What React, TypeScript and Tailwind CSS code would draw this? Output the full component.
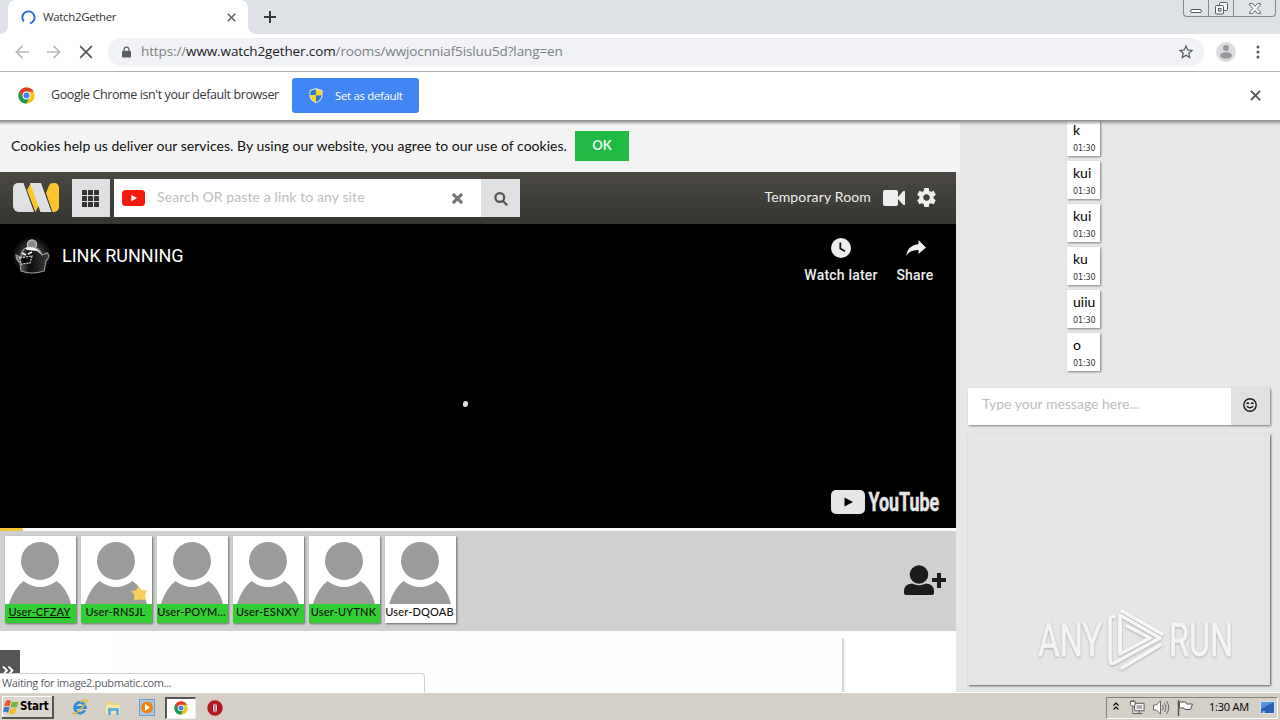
import React from 'react';

const ui = "font-['Open_Sans','Noto_Sans',sans-serif]";

function ChromeLogo({ className }: { className: string }) {
  return (
    <svg viewBox="0 0 24 24" className={className}>
      <circle cx="12" cy="12" r="11.5" fill="#fbc116" />
      <path d="M12 12 L7 14.8 L2.1 6.2 A11.5 11.5 0 0 1 22 6.5 H12 Z" fill="#dd3d2e" />
      <path d="M2.1 6.2 A11.5 11.5 0 0 0 11.6 23.5 L16.6 14.8 L12 17 L7 14.8 Z" fill="#149b56" />
      <circle cx="12" cy="12" r="5.6" fill="#fff" />
      <circle cx="12" cy="12" r="4.3" fill="#4584ed" />
    </svg>
  );
}

function Cross({ className, w = 2 }: { className: string; w?: number }) {
  return (
    <svg viewBox="0 0 12 12" className={className} stroke="currentColor" strokeWidth={w} fill="none">
      <path d="M1 1 11 11 M11 1 1 11" />
    </svg>
  );
}

function TabStrip() {
  return (
    <div className="flex h-[34px] shrink-0 items-end bg-[#dee1e6]">
      <div className="h-full w-2 bg-white">
        <div className="h-full rounded-br-lg bg-[#dee1e6]" />
      </div>
      <div className="flex h-full w-60 items-center rounded-t-lg bg-white pl-[13px]">
        <svg viewBox="0 0 16 16" className="h-[15px] w-[15px]" fill="none" stroke="#2a68d8" strokeWidth="2">
          <path d="M3 12.200A6.500 6.500 0 1 1 9.500 14.300" />
        </svg>
        <span className="ml-[7px] w-[150px] text-[11.5px] tracking-[-0.35px] text-[#333]">Watch2Gether</span>
        <Cross className="ml-[34px] h-[9px] w-[9px] text-[#5f6368]" />
      </div>
      <div className="flex h-full w-11 bg-white">
        <div className="flex h-full w-full items-center rounded-bl-lg bg-[#dee1e6] pl-4">
          <svg viewBox="0 0 12 12" className="h-3 w-3" stroke="#36393d" strokeWidth="2">
            <path d="M6 0V12M0 6H12" />
          </svg>
        </div>
      </div>
      <div className="ml-auto mr-1 flex h-[17px] w-[93px] self-start rounded-b border border-t-0 border-[#85888f] bg-[#dfe2e7]">
        <div className="flex w-[25px] items-end justify-center border-r border-[#85888f] pb-[3px]">
          <div className="h-1 w-3 rounded-sm border border-[#555960] bg-white" />
        </div>
        <div className="flex w-[25px] items-center justify-center border-r border-[#85888f]">
          <svg viewBox="0 0 13 13" className="h-[13px] w-[13px]" fill="#f5f6f8" stroke="#555960">
            <rect x="4.5" y=".5" width="8" height="8" rx="1" />
            <rect x=".5" y="3.500" width="8" height="8.500" rx="1" />
            <rect x="3.500" y="6.500" width="2.500" height="2.500" />
          </svg>
        </div>
        <div className="flex flex-1 items-center justify-center">
          <svg viewBox="0 0 12 11" className="h-[11px] w-3" fill="#f5f6f8" stroke="#555960" strokeWidth=".9">
            <path d="M.6.6H3.700L6 3.400 8.300.6H11.400V2L8.200 5.500 11.400 9V10.400H8.300L6 7.600 3.700 10.400H.6V9L3.800 5.500.6 2Z" />
          </svg>
        </div>
      </div>
    </div>
  );
}

function Toolbar() {
  return (
    <div className="flex h-[38px] shrink-0 items-center border-b border-[#b1b3b5] bg-white pb-px pl-[15px] pr-[14px]">
      <svg viewBox="0 0 14 14" className="h-[14px] w-[14px]" fill="none" stroke="#b5b7ba" strokeWidth="1.700">
        <path d="M14 7H1.500M7.500 .8 1.300 7 7.500 13.200" />
      </svg>
      <svg viewBox="0 0 14 14" className="ml-[18px] h-[14px] w-[14px]" fill="none" stroke="#b5b7ba" strokeWidth="1.700">
        <path d="M0 7H12.500M6.500 .8 12.700 7 6.500 13.200" />
      </svg>
      <Cross className="ml-[18px] h-[14px] w-[14px] text-[#55585c]" w={1.5} />
      <div className="ml-[15px] flex h-7 w-[1096px] items-center rounded-full bg-[#f0f2f5] pl-[14px] pr-[9px]">
        <svg viewBox="0 0 10 12" className="h-3 w-[9px]" fill="#5a5d61">
          <rect x="0" y="4.500" width="10" height="7.500" rx="1" />
          <path d="M2.300 5V3.200a2.700 2.700 0 0 1 5.400 0V5" fill="none" stroke="#5a5d61" strokeWidth="1.300" />
        </svg>
        <span className="mb-px ml-[10px] whitespace-pre text-[13.5px] tracking-[-0.12px] text-[#7c7f84]">
          https://<span className="text-[#202124]">www.watch2gether.com</span>/rooms/wwjocnniaf5isluu5d?lang=en
        </span>
        <svg viewBox="0 0 24 24" className="ml-auto h-[18px] w-[18px]" fill="#55585c">
          <path d="M22 9.240l-7.190-.62L12 2 9.190 8.630 2 9.240l5.460 4.730L5.820 21 12 17.270 18.180 21l-1.630-7.030L22 9.240zM12 15.400l-3.760 2.270 1-4.280-3.320-2.880 4.380-.38L12 6.100l1.710 4.040 4.380.38-3.320 2.880 1 4.280L12 15.400z" />
        </svg>
      </div>
      <svg viewBox="0 0 20 20" className="ml-3 h-5 w-5">
        <circle cx="10" cy="10" r="10" fill="#dcdddf" />
        <circle cx="10" cy="6" r="3" fill="#97999c" />
        <ellipse cx="10" cy="13.500" rx="6" ry="3.200" fill="#97999c" />
      </svg>
      <svg viewBox="0 0 4 14" className="ml-auto mr-[6px] h-[14px] w-1" fill="#55585c">
        <circle cx="2" cy="2" r="1.500" /><circle cx="2" cy="7" r="1.500" /><circle cx="2" cy="12" r="1.500" />
      </svg>
    </div>
  );
}

function InfoBar() {
  return (
    <div className="flex h-[49px] shrink-0 items-center bg-white pb-[2px] pl-[18px] pr-[19px]">
      <ChromeLogo className="h-[17px] w-[17px]" />
      <span className="ml-4 w-[229px] whitespace-nowrap text-[12.5px] tracking-[-0.4px] text-[#35383c]">Google Chrome isn't your default browser</span>
      <div className="ml-3 flex h-[35px] w-[127px] items-center rounded-[3px] bg-[#4285f4] pl-[17px] text-[11.5px] tracking-[-0.35px] text-white">
        <svg viewBox="0 0 14 15" className="mr-3 h-[15px] w-[14px]">
          <path d="M7 0 13.500 2.200V7C13.500 11 10.500 13.800 7 15 3.500 13.800.5 11 .5 7V2.200Z" fill="#e6e9da" />
          <path d="M6.900 1.200V7.300H1.400V2.900Z M12.600 7.300C12.400 10.600 10 12.900 7 14V7.300Z" fill="#2f76c4" />
          <path d="M7 1.200V7.300H12.600V2.900Z M1.400 7.300C1.600 10.600 4 12.900 7 14V7.300Z" fill="#f8d327" />
        </svg>
        Set as default
      </div>
      <Cross className="ml-auto h-[11px] w-[11px] text-[#55585c]" w={2.1} />
    </div>
  );
}

function CookieBar() {
  return (
    <div className="flex h-[51px] w-[960px] shrink-0 items-center bg-[#f3f3f3] pb-px pl-[11px] text-[14px] text-[#111]">
      <span className="mb-[2px] w-[564px] whitespace-nowrap tracking-[0.03px]">Cookies help us deliver our services. By using our website, you agree to our use of cookies.</span>
      <div className="flex h-[30px] w-[54px] items-center justify-center bg-[#21ba45] text-[13px] font-bold text-[#e9f8ed]">OK</div>
    </div>
  );
}

function RoomHeader() {
  return (
    <div className="flex h-[52px] shrink-0 items-center bg-linear-to-b from-[#4b4844] to-[#353630] pl-[13px] pr-5">
      <svg viewBox="0 0 46 30" className="h-[30px] w-[46px]">
        <path d="M18 0 14 7 22.500 29 27 20Z" fill="#fbc52e" />
        <path d="M41 0A4.500 4.500 0 0 1 46 4.500V24A5 5 0 0 1 41 29H39.500L33 10 36 2.500Q37 0 39.500 0Z" fill="#fbc52e" />
        <path d="M5 0H10.500L21 29H6A6 6 0 0 1 0 23V5A5 5 0 0 1 5 0Z" fill="#dfe0e2" />
        <path d="M17 0H28L38.500 29H27.500Z" fill="#dfe0e2" />
      </svg>
      <div className="ml-[13px] flex h-[38px] w-[38px] items-center justify-center bg-[#dfe0e2] pr-px">
        <svg viewBox="0 0 17 17" className="h-[17px] w-[17px]" fill="#333">
          {[0, 6, 12].map((x) => [0, 6, 12].map((y) => <rect key={`${x}-${y}`} x={x} y={y} width="5" height="5" rx=".5" />))}
        </svg>
      </div>
      <div className="ml-1 flex h-[38px] w-[367px] items-center bg-white pl-2 pr-[18px]">
        <svg viewBox="0 0 23 16" className="h-4 w-[23px]">
          <rect width="23" height="16" rx="3.500" fill="#f61c0d" /><path d="M9.300 4.700 15 8 9.300 11.300Z" fill="#fff" />
        </svg>
        <span className="mb-1 ml-3 text-[14px] tracking-[0.1px] text-[#bdbdbd]">Search OR paste a link to any site</span>
        <Cross className="ml-auto h-[11px] w-[11px] text-[#777]" w={3.4} />
      </div>
      <div className="flex h-[38px] w-[39px] items-center justify-center bg-[#dfe0e2] pt-[2px]">
        <svg viewBox="0 0 14 14" className="h-[14px] w-[14px]" fill="none" stroke="#555" strokeWidth="2.200">
          <circle cx="5.800" cy="5.500" r="4.400" /><path d="M9 9 13.200 13.200" />
        </svg>
      </div>
      <span className="ml-auto mb-1 text-[14px] tracking-[0.15px] text-[#eee]">Temporary Room</span>
      <svg viewBox="0 0 22 16" className="mb-px ml-3 h-4 w-[22px]" fill="#eee">
        <rect y="0" width="15" height="16" rx="2" /><path d="M15 7 20 1.200Q22 0 22 2V14Q22 16 20 14.800L15 9Z" />
      </svg>
      <svg viewBox="2 2 20 20" className="mb-px ml-3 h-[19px] w-[19px]" fill="#eee">
        <path d="M19.430 12.980c.04-.32.070-.64.070-.98s-.03-.66-.07-.98l2.110-1.650c.19-.15.240-.42.120-.64l-2-3.460c-.12-.22-.39-.3-.61-.22l-2.490 1c-.52-.4-1.080-.73-1.690-.98l-.38-2.650A.488.488 0 0 0 14 2h-4c-.25 0-.46.180-.49.420l-.38 2.650c-.61.250-1.170.590-1.690.980l-2.490-1c-.23-.09-.49 0-.61.220l-2 3.460c-.13.220-.07.490.120.640l2.110 1.650c-.04.320-.07.650-.07.980s.03.660.070.980l-2.110 1.650c-.19.150-.24.420-.12.640l2 3.460c.12.220.390.300.610.220l2.490-1c.52.400 1.080.730 1.690.980l.38 2.650c.03.240.240.420.490.420h4c.25 0 .46-.18.490-.42l.38-2.650c.61-.25 1.170-.59 1.690-.98l2.490 1c.23.090.490 0 .61-.22l2-3.460c.12-.22.070-.49-.12-.64l-2.110-1.650zM12 15.500c-1.930 0-3.500-1.570-3.500-3.500s1.570-3.500 3.500-3.500 3.500 1.570 3.500 3.500-1.570 3.500-3.500 3.500z" />
      </svg>
    </div>
  );
}

function Video() {
  return (
    <div className="flex h-[304px] shrink-0 flex-col bg-black pl-3 pr-[21px] font-[Roboto,sans-serif] text-[#eee]">
      <div className="flex h-20 items-start pt-3">
        <svg viewBox="0 0 40 40" className="h-10 w-10">
          <defs>
            <radialGradient id="aura"><stop offset=".6" stopColor="#2c2c2c" /><stop offset="1" stopColor="#000" /></radialGradient>
            <linearGradient id="ghost"><stop offset=".05" stopColor="#777" /><stop offset=".4" stopColor="#0c0c0c" /><stop offset="1" stopColor="#3c3c3c" /></linearGradient>
          </defs>
          <circle cx="20" cy="20" r="20" fill="url(#aura)" />
          <circle cx="20" cy="8.500" r="4.500" fill="#888" stroke="#bbb" strokeWidth="1.500" />
          <path d="M9 20C9 8 28 8 30 19L35 17Q39 20 34 25L32 35Q20 39 9 35L8 27Q4 24 4 19L8 21Z" fill="url(#ghost)" stroke="#999" strokeWidth="1.100" />
          <path d="M13 12Q24 8 30 19L25 15 15 14Z" fill="#f4f4f4" />
          <path d="M10 17 14 19M16 18 20 16" stroke="#fff" strokeWidth="1.500" />
          <path d="M8 22 20 20 18 27 9 28Z" fill="#080808" stroke="#ddd" strokeWidth="1.200" strokeDasharray="2 1" />
        </svg>
        <span className="ml-[10px] mt-[6px] text-[18px] leading-7 text-white">LINK RUNNING</span>
        <div className="ml-auto mt-[2px] flex w-[76px] flex-col items-center text-[14px] font-medium">
          <svg viewBox="0 0 20 20" className="h-5 w-5"><circle cx="10" cy="10" r="10" fill="#eee" /><path d="M9.300 4.500V10.500L14 13.300" fill="none" stroke="#111" strokeWidth="1.800" /></svg>
          <span className="mt-[7px] whitespace-nowrap leading-5 tracking-[0.2px]">Watch later</span>
        </div>
        <div className="ml-4 mt-[2px] flex w-10 flex-col items-center text-[14px] font-medium">
          <svg viewBox="0 0 20 20" className="ml-px h-5 w-5"><path d="M12.500 2 20 9.500 12.500 16V12Q4 11.500 0 18 1.500 7.500 12.500 6Z" fill="#eee" /></svg>
          <span className="mt-[7px] leading-5 tracking-[0.2px]">Share</span>
        </div>
      </div>
      <div className="flex flex-1 items-center justify-center pt-[14px]">
        <div className="mr-[17px] h-[6px] w-[5px] rotate-12 rounded-sm bg-[#ddd]" />
      </div>
      <svg viewBox="0 0 110 26" className="-mr-[5px] mb-[13px] h-[26px] w-[110px] shrink-0 self-end overflow-visible">
        <rect x="1" y="1" width="34" height="24" rx="5" fill="#e6e6e6" />
        <path d="M14.500 8.500 23 13 14.500 17.500Z" fill="#000" />
        <text x="0" y="0" transform="translate(38.500 22) scale(.72 1)" fontFamily="Roboto, sans-serif" fontWeight="700" fontSize="25" textLength="98" lengthAdjust="spacingAndGlyphs" fill="#e6e6e6" stroke="#e6e6e6" strokeWidth=".5">YouTube</text>
      </svg>
    </div>
  );
}

const users = [
  { name: 'User-CFZAY', on: true, self: true, star: false },
  { name: 'User-RNSJL', on: true, self: false, star: true },
  { name: 'User-POYM...', on: true, self: false, star: false },
  { name: 'User-ESNXY', on: true, self: false, star: false },
  { name: 'User-UYTNK', on: true, self: false, star: false },
  { name: 'User-DQOAB', on: false, self: false, star: false },
];

function Users() {
  return (
    <div className="flex h-[100px] shrink-0 items-start bg-[#d0d0d0] pl-[5px] pt-[5px]">
      <div className="flex gap-[5px]">
        {users.map((u) => (
          <div key={u.name} className="relative h-[87px] w-[71px] bg-white shadow-[1px_1px_2px_rgba(0,0,0,0.5)]">
            <svg viewBox="0 0 71 68" className="h-[68px] w-[71px]" fill="#9b9b9b">
              <circle cx="35" cy="25" r="19" />
              <path d="M4 68Q9 52 18.500 45Q35 57 51.500 45Q62 52 66 68Z" />
            </svg>
            {u.star && (
              <svg viewBox="0 0 16 15" className="absolute bottom-[22px] right-[5px] h-[15px] w-4">
                <path d="M7.500 0 10.500 4 16 4.500 14 9 15 14 9 13.500 3 14.500 3.500 9 0 5 5 4.500Z" fill="#f8cf58" />
              </svg>
            )}
            <div className={`flex h-[19px] items-center justify-center whitespace-nowrap pb-[3px] pr-[2px] text-[11px] font-medium tracking-[0.18px] text-[#111] ${u.on ? 'bg-[#32cd32]' : 'bg-white'} ${u.self ? 'underline' : ''}`}>
              {u.name}
            </div>
          </div>
        ))}
      </div>
      <svg viewBox="0 0 42 30" className="ml-auto mr-[10px] mt-[29px] h-[30px] w-[42px]" fill="#1b1b1b">
        <circle cx="15" cy="9.500" r="9.300" />
        <path d="M0 26Q0 19 8 18.500Q15 22 22 18.500Q30 19 30 26V28Q30 30 28 30H2Q0 30 0 28Z" />
        <path d="M33 8H37V13H42V17H37V23H33V17H28V13H33Z" />
      </svg>
    </div>
  );
}

const messages = ['k', 'kui', 'kui', 'ku', 'uiiu', 'o'];

function Sidebar() {
  return (
    <div className="flex flex-1 flex-col bg-[#e7e7e7] pl-2 pr-[10px]">
      <div className="flex h-[267px] flex-col items-center gap-[5px] overflow-hidden pr-[71px]">
        {messages.map((m, i) => (
          <div key={i} className={`h-[38px] w-[33px] shrink-0 bg-white pl-[6px] text-[14px] leading-5 text-black shadow-[1px_1px_2px_rgba(0,0,0,0.45)] ${i === 0 ? '-mt-[3px]' : ''}`}>
            <div className="h-6 pt-[2px]">{m}</div>
            <div className="text-[8px] leading-[13px] tracking-[-0.1px] text-[#333] font-['DejaVu_Sans',sans-serif]">01:30</div>
          </div>
        ))}
      </div>
      <div className="flex h-[37px] shrink-0 bg-white shadow-[1px_1px_2px_rgba(0,0,0,0.45)]">
        <div className="flex-1 pl-[14px] pt-[5px] text-[14px] leading-[21px] text-[#bdbdbd]">Type your message here...</div>
        <div className="flex w-[39px] items-center justify-center bg-[#e0e1e2] pr-px pb-[3px]">
          <svg viewBox="0 0 14 14" className="h-[14px] w-[14px]" fill="none" stroke="#1b1b1b" strokeWidth="1.400">
            <circle cx="7" cy="7" r="6.200" /><path d="M3.500 5.700Q4.800 4.300 6 5.700M8 5.700Q9.200 4.300 10.500 5.700M3.800 8.200Q7 11.300 10.200 8.200" />
          </svg>
        </div>
      </div>
      <div className="mt-[9px] flex h-[251px] shrink-0 items-end justify-end bg-[#e5e5e5] pb-[13px] pr-[34px] shadow-[1px_1px_2px_rgba(0,0,0,0.6)]">
        <svg viewBox="0 0 202 66" className="h-[66px] w-[202px] overflow-visible drop-shadow-[0_1px_1px_rgba(0,0,0,0.25)]" fill="none" stroke="#f6f6f6" strokeWidth="3.500" strokeLinejoin="round" strokeLinecap="round">
          <text x="4" y="50" fontFamily="'Liberation Sans Narrow', Roboto, sans-serif" fontSize="47" textLength="64" lengthAdjust="spacingAndGlyphs" fill="#f3f3f3" stroke="#f3f3f3" strokeWidth=".8">ANY</text>
          <text x="135" y="50" fontFamily="'Liberation Sans Narrow', Roboto, sans-serif" fontSize="47" textLength="64" lengthAdjust="spacingAndGlyphs" fill="#f3f3f3" stroke="#f3f3f3" strokeWidth=".8">RUN</text>
          <g transform="translate(2)">
            <path d="M78 11Q74 9 74 14V53Q74 60 80 56L124 32 84 9V45" />
            <path d="M86 5 126 28M84 17V48L114 32 91 20M86 62 124 39" />
          </g>
        </svg>
      </div>
    </div>
  );
}

function PageBottom() {
  return (
    <div className="relative flex h-[61px] shrink-0 items-start bg-white">
      <div className="mt-[19px] flex h-[30px] w-5 items-end justify-center bg-[#555] pb-[5px] pr-1">
        <svg viewBox="0 0 12 9" className="h-[9px] w-3" fill="none" stroke="#fff" strokeWidth="1.800"><path d="M1 .5 5 4.500 1 8.500M6.500.5 10.500 4.500 6.500 8.500" /></svg>
      </div>
      <div className="ml-[93px] mt-[7px] h-[54px] w-[730px] border-r border-[#d0d0d0] bg-[#fefefe] shadow-[1px_1px_2px_rgba(0,0,0,0.2)]" />
      <div className="absolute bottom-0 left-0 h-[19px] w-[425px] rounded-tr border-r border-t border-[#d0d0d0] bg-white pl-[2px] text-[11px] leading-[18px] tracking-[-0.36px] text-[#5c6065]">Waiting for image2.pubmatic.com...</div>
    </div>
  );
}

function Taskbar() {
  return (
    <div className="flex h-[28px] shrink-0 items-center border-t border-white bg-[#d4cfc7] pt-[2px]">
      <div className="ml-[2px] flex h-[23px] w-[52px] items-center border-b-2 border-r-2 border-[#5a5753] bg-[#dbd7d0] pl-px text-black shadow-[inset_1px_1px_0_#fff]">
        <svg viewBox="0 0 16 16" className="h-4 w-4">
          <path d="M3 2Q5 0 8 2L6.500 7.500Q4 6 1 7.500Z" fill="#ea5a29" /><path d="M9 2.500Q12 4 15.500 2.500L14 8Q11 9 7.500 7.800Z" fill="#79b63b" />
          <path d="M1 8.500Q4 7 6.500 8.500L5 14Q2.500 12 0 13.500Z" fill="#3979ca" /><path d="M7.300 9Q10 10.500 13.500 9L12 14.500Q9 16 5.800 14.300Z" fill="#f2bd29" />
        </svg>
        <span className="pl-px text-[11.5px] font-bold tracking-[-0.2px] font-['DejaVu_Sans_Condensed','DejaVu_Sans',sans-serif]">Start</span>
      </div>
      <svg viewBox="0 0 18 18" className="ml-[17px] h-[17px] w-[18px]" fill="none">
        <path d="M14 12A5.700 5.700 0 1 1 14.700 9H4" stroke="#2c8ed7" strokeWidth="3" />
        <path d="M1 15C3 18 12 10 16 3 18-1 13 1 9 3" stroke="#e6b93c" strokeWidth="1.500" />
      </svg>
      <svg viewBox="0 0 16 17" className="ml-4 h-[17px] w-4">
        <path d="M1 3H6L7 4H14V14H1Z" fill="#ecd681" /><path d="M1 6H15V15H1Z" fill="#f7e9a5" /><path d="M3 9H14V16H11V12H6V16H3Z" fill="#62b1dc" />
      </svg>
      <svg viewBox="0 0 16 17" className="ml-[18px] h-[17px] w-4">
        <rect x=".5" y=".5" width="15" height="16" fill="#a9c7e5" stroke="#6a9fcd" /><circle cx="8" cy="8.500" r="6" fill="#f28414" /><path d="M6 5 11 8.500 6 12Z" fill="#fff" />
      </svg>
      <div className="ml-[10px] flex h-[22px] w-[31px] items-center justify-center border border-l-2 border-t-2 border-[#eee] border-l-[#555] border-t-[#555] bg-white">
        <ChromeLogo className="h-[14px] w-[14px]" />
      </div>
      <svg viewBox="0 0 16 16" className="ml-[11px] h-4 w-4"><circle cx="8" cy="8" r="7.700" fill="#b61622" /><ellipse cx="8" cy="8" rx="2.500" ry="5" fill="#eee" stroke="#8c0813" /><path d="M8 4V12" stroke="#b61622" /></svg>
      <div className="ml-auto mr-[2px] flex h-[22px] w-[172px] items-center border border-[#fff] border-l-[#85817a] border-t-[#85817a] pl-[6px] text-[11px] text-black">
        <svg viewBox="0 0 6 8" className="mb-1 h-2 w-[6px]" fill="none" stroke="#000" strokeWidth="1.100"><path d="M.5 3.500 3 1 5.500 3.500M.5 7.500 3 5 5.500 7.500" /></svg>
        <svg viewBox="0 0 16 16" className="ml-[10px] h-[15px] w-[16px]" fill="#fafafa" stroke="#555">
          <rect x="5.500" y="3.500" width="10" height="8" /><rect x="7.500" y="5.500" width="6" height="4" fill="#aaa" stroke="none" /><path d="M6 14.500H14M10.500 12V14" /><path d="M1 1.500H6V5L4.500 6.500H2.500L1 5ZM3.500 7V14.500H6" /><path d="M2.500 0V2M4.500 0V2" />
        </svg>
        <svg viewBox="0 0 17 15" className="ml-[8px] h-[15px] w-[17px]" fill="#fafafa" stroke="#666"><path d="M.5 5H3.500L7.500.8V14.200L3.500 10H.5Z" /><path d="M9.500 5Q11 7.500 9.500 10M11.500 3Q14.500 7.500 11.500 12M13.500 1Q18 7.500 13.500 14" fill="none" /></svg>
        <svg viewBox="0 0 17 16" className="ml-[7px] h-4 w-[17px]" fill="#fff" stroke="#555"><path d="M1.500 0V16" strokeWidth="1.500" /><path d="M2.500 2H8.500L9.500 4H15.500L13.500 9.500H8L7 8H2.500Z" /></svg>
        <span className="ml-[15px] w-[41px] whitespace-nowrap tracking-[-0.2px]">1:30 AM</span>
        <svg viewBox="0 0 15 13" className="ml-[10px] h-[13px] w-[15px] shrink-0"><rect x=".5" y=".5" width="14" height="12" fill="#2762b5" stroke="#d9e2ee" /><path d="M1 1H14L1 8Z" fill="#5694df" /><path d="M2 11H5" stroke="#eee" /></svg>
      </div>
    </div>
  );
}

export default function App() {
  return (
    <div className={`flex h-[720px] w-[1280px] flex-col overflow-hidden bg-white ${ui}`}>
      <TabStrip />
      <Toolbar />
      <InfoBar />
      <div className="relative h-[571px] shrink-0">
        <div className="flex h-full overflow-hidden bg-[#e7e7e7]">
          <div className="flex w-[960px] shrink-0 flex-col font-[Lato,sans-serif]">
            <CookieBar />
            <div className="flex w-[956px] flex-col">
              <RoomHeader />
              <Video />
              <div className="flex h-[3px] shrink-0 bg-white"><div className="h-[3px] w-[23px] bg-[#f3c537]" /></div>
              <Users />
              <div className={ui}><PageBottom /></div>
            </div>
          </div>
          <div className="flex flex-1 font-[Lato,sans-serif]"><Sidebar /></div>
        </div>
        <div className="absolute inset-x-0 -top-px h-[5px] bg-linear-to-b from-[#858585] to-transparent" />
      </div>
      <Taskbar />
    </div>
  );
}
